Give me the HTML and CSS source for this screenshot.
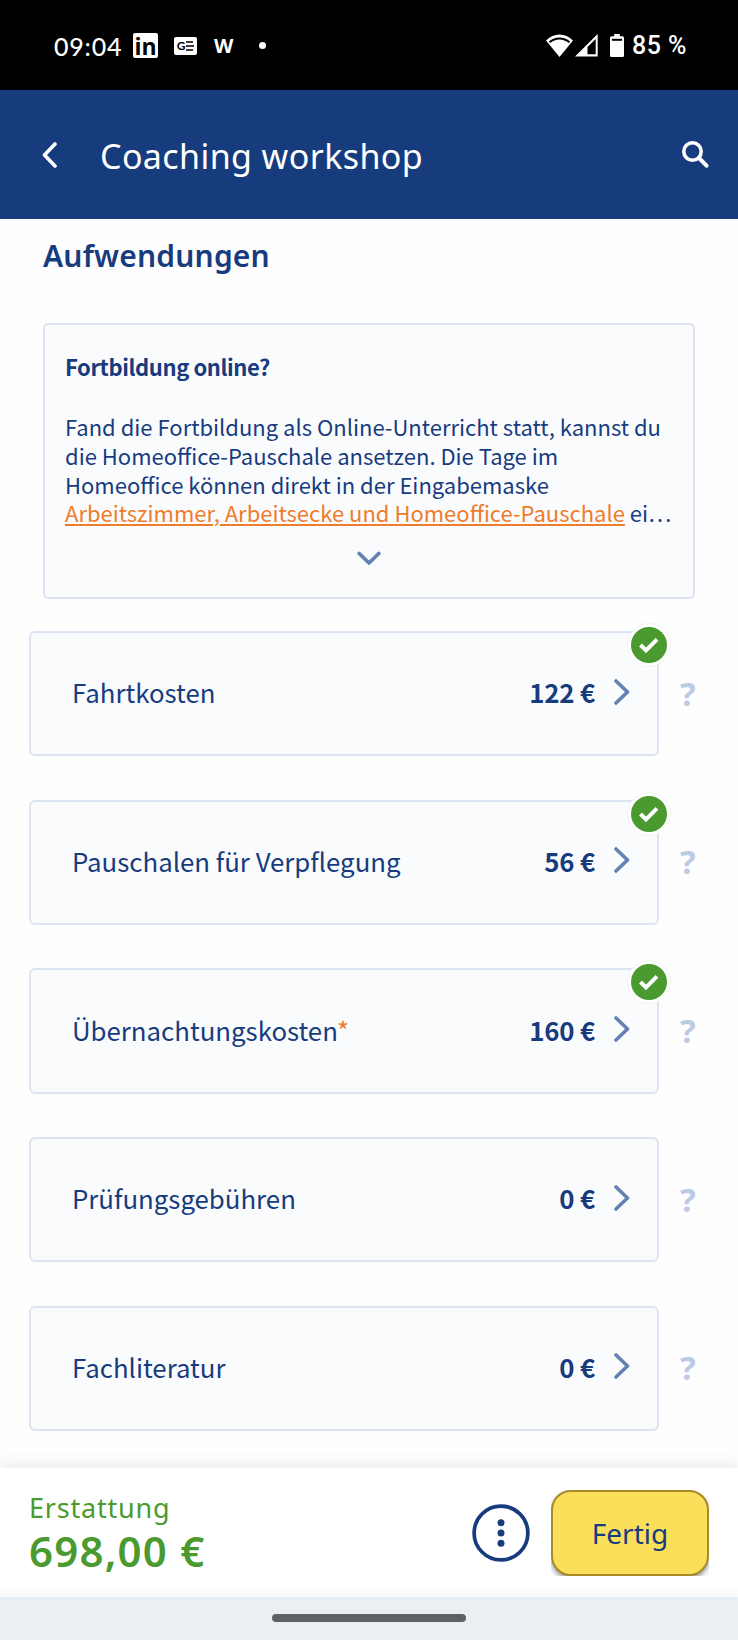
FILE: index.html
```html
<!DOCTYPE html>
<html lang="de">
<head>
  <meta charset="UTF-8">
  <title>Coaching workshop</title>
  <link rel="stylesheet" href="styles.css">
</head>
<body>
  <div class="statusbar">
    <span class="time">09:04</span>
    <div class="notifications">
      <span class="linkedin">in</span>
      <span class="news">
        <b>G</b>
        <svg width="8" height="10" viewBox="0 0 8 10"><path d="M0 1h7M0 5h8M0 9h7" stroke="#000" stroke-width="1.6"/></svg>
      </span>
      <span class="w">W</span>
      <span class="dot"></span>
    </div>
    <div class="system">
      <svg width="27" height="23" viewBox="0 0 27 23">
        <path d="M0 6.500C7.500-1.500 19.500-1.500 27 6.500L13.500 23Z" fill="#fff"/>
        <path d="M3.500 8.200C9.500 3.200 17.500 3.200 23.500 8.200" fill="none" stroke="#000" stroke-width="2"/>
      </svg>
      <svg class="signal" width="23" height="23" viewBox="0 0 23 23">
        <path d="M0 22.500L22.700 0V22.500Z" fill="#fff"/>
        <path d="M12.500 13L20.700 5V20.300H12.500Z" fill="#000"/>
      </svg>
      <svg class="battery" width="14" height="23" viewBox="0 0 14 23">
        <path d="M4.200 0H9.800V2.200H12.500Q14 2.200 14 3.700V21.500Q14 23 12.500 23H1.500Q0 23 0 21.500V3.700Q0 2.200 1.500 2.200H4.200Z" fill="#fff"/>
        <path d="M2 5.800H12" stroke="#000" stroke-width="2"/>
      </svg>
      <span class="percent">85 %</span>
    </div>
  </div>

  <header class="header">
    <svg class="back" width="15" height="26" viewBox="0 0 15 26"><path d="M13 2L2.500 13L13 24" fill="none" stroke="#fff" stroke-width="3.600" stroke-linecap="round" stroke-linejoin="round"/></svg>
    <h1>Coaching workshop</h1>
    <svg class="search" width="27" height="27" viewBox="0 0 27 27"><circle cx="10.500" cy="10.500" r="8.700" fill="none" stroke="#fff" stroke-width="3.600"/><path d="M17 17L24.500 24.700" stroke="#fff" stroke-width="4" stroke-linecap="round"/></svg>
  </header>

  <main>
    <h2>Aufwendungen</h2>

    <section class="info">
      <h3>Fortbildung online?</h3>
      <p>Fand die Fortbildung als Online-Unterricht statt, kannst du<br>
        die Homeoffice-Pauschale ansetzen. Die Tage im<br>
        Homeoffice können direkt in der Eingabemaske<br>
        <a>Arbeitszimmer, Arbeitsecke und Homeoffice-Pauschale</a> ei…</p>
      <svg class="expand" width="24" height="15" viewBox="0 0 24 15"><path d="M2.200 2.500L12 12L21.800 2.500" fill="none" stroke="#6482b1" stroke-width="3.800" stroke-linecap="round" stroke-linejoin="round"/></svg>
    </section>

    <div class="list">
      <div class="row">
        <div class="card">
          <span class="label">Fahrtkosten</span>
          <span class="amount">122 €</span>
          <svg class="chevron" width="16" height="26" viewBox="0 0 16 26"><path d="M2 2L13.500 13L2 24" fill="none" stroke="#6482b1" stroke-width="3.600" stroke-linecap="round" stroke-linejoin="round"/></svg>
          <svg class="check" width="44" height="44" viewBox="0 0 44 44"><circle cx="22" cy="22" r="21.500" fill="#fff" stroke="#eaf4e6" stroke-width=".8"/><circle cx="22" cy="22" r="18" fill="#4a9a2f"/><path d="M13.500 22L19 27.500L30 16.400" fill="none" stroke="#fff" stroke-width="4"/></svg>
        </div>
        <span class="help">?</span>
      </div>
      <div class="row">
        <div class="card">
          <span class="label">Pauschalen für Verpflegung</span>
          <span class="amount">56 €</span>
          <svg class="chevron" width="16" height="26" viewBox="0 0 16 26"><path d="M2 2L13.500 13L2 24" fill="none" stroke="#6482b1" stroke-width="3.600" stroke-linecap="round" stroke-linejoin="round"/></svg>
          <svg class="check" width="44" height="44" viewBox="0 0 44 44"><circle cx="22" cy="22" r="21.500" fill="#fff" stroke="#eaf4e6" stroke-width=".8"/><circle cx="22" cy="22" r="18" fill="#4a9a2f"/><path d="M13.500 22L19 27.500L30 16.400" fill="none" stroke="#fff" stroke-width="4"/></svg>
        </div>
        <span class="help">?</span>
      </div>
      <div class="row">
        <div class="card">
          <span class="label">Übernachtungskosten<span class="required">*</span></span>
          <span class="amount">160 €</span>
          <svg class="chevron" width="16" height="26" viewBox="0 0 16 26"><path d="M2 2L13.500 13L2 24" fill="none" stroke="#6482b1" stroke-width="3.600" stroke-linecap="round" stroke-linejoin="round"/></svg>
          <svg class="check" width="44" height="44" viewBox="0 0 44 44"><circle cx="22" cy="22" r="21.500" fill="#fff" stroke="#eaf4e6" stroke-width=".8"/><circle cx="22" cy="22" r="18" fill="#4a9a2f"/><path d="M13.500 22L19 27.500L30 16.400" fill="none" stroke="#fff" stroke-width="4"/></svg>
        </div>
        <span class="help">?</span>
      </div>
      <div class="row">
        <div class="card">
          <span class="label">Prüfungsgebühren</span>
          <span class="amount">0 €</span>
          <svg class="chevron" width="16" height="26" viewBox="0 0 16 26"><path d="M2 2L13.500 13L2 24" fill="none" stroke="#6482b1" stroke-width="3.600" stroke-linecap="round" stroke-linejoin="round"/></svg>
        </div>
        <span class="help">?</span>
      </div>
      <div class="row">
        <div class="card">
          <span class="label">Fachliteratur</span>
          <span class="amount">0 €</span>
          <svg class="chevron" width="16" height="26" viewBox="0 0 16 26"><path d="M2 2L13.500 13L2 24" fill="none" stroke="#6482b1" stroke-width="3.600" stroke-linecap="round" stroke-linejoin="round"/></svg>
        </div>
        <span class="help">?</span>
      </div>
    </div>
  </main>

  <footer class="footer">
    <div class="refund">
      <div class="refund-label">Erstattung</div>
      <div class="refund-value">698,00 €</div>
    </div>
    <svg class="more" width="58" height="58" viewBox="0 0 58 58"><circle cx="29" cy="29" r="26.900" fill="none" stroke="#173c7e" stroke-width="3.700"/><g fill="#173c7e"><circle cx="29" cy="18.700" r="3.500"/><circle cx="29" cy="29" r="3.500"/><circle cx="29" cy="39.300" r="3.500"/></g></svg>
    <div class="done-wrap"><button class="done">Fertig</button></div>
  </footer>

  <div class="navbar"><span class="pill"></span></div>
</body>
</html>
```

FILE: styles.css
```css
* {
  box-sizing: border-box;
}

body {
  margin: 0;
  height: 1640px;
  display: flex;
  flex-direction: column;
  overflow: hidden;
  background: #fefefe;
  color: #173c7e;
  font-family: "Noto Sans CJK JP", sans-serif;
}

h1, h2, h3, p {
  margin: 0;
}

svg {
  display: block;
  flex: none;
}

/* status bar */
.statusbar {
  height: 90px;
  padding: 1px 51px 0 54px;
  display: flex;
  align-items: center;
  background: #000;
  color: #fff;
  font-family: Lato, sans-serif;
}

.time {
  width: 79px;
  font-size: 25px;
  font-weight: 500;
  letter-spacing: 0.8px;
}

.notifications {
  display: flex;
  align-items: center;
}

.linkedin {
  width: 25px;
  height: 25px;
  border-radius: 2px;
  background: #fff;
  color: #000;
  font: bold 23px/26px "Open Sans", sans-serif;
  text-align: center;
}

.news {
  width: 23px;
  height: 18px;
  margin-left: 16px;
  border-radius: 2px;
  display: flex;
  align-items: center;
  justify-content: center;
  gap: 1px;
  background: #fff;
  color: #000;
  font-size: 12px;
}

.w {
  margin-left: 17px;
  font: bold 20px/24px "Open Sans", sans-serif;
}

.dot {
  width: 7px;
  height: 7px;
  margin-left: 26px;
  border-radius: 50%;
  background: #fff;
}

.system {
  margin-left: auto;
  display: flex;
  align-items: center;
}

.signal {
  margin-left: 2px;
}

.battery {
  margin: 0 8px 0 12px;
}

.percent {
  font: 500 25px/30px Roboto, sans-serif;
  letter-spacing: 0.5px;
}

/* header */
.header {
  height: 129px;
  padding: 0 29px 0 42px;
  display: flex;
  align-items: center;
  background: #173c7e;
  color: #fff;
}

.header h1 {
  margin-left: 43px;
  padding-top: 3px;
  font: 400 34px/44px "Noto Sans", sans-serif;
  letter-spacing: 0.4px;
  white-space: nowrap;
}

.search {
  margin-left: auto;
}

/* content */
main {
  flex: 1;
}

h2 {
  height: 104px;
  padding: 15px 43px 0;
  font: 600 30px/44px "Noto Sans", sans-serif;
  letter-spacing: 0.2px;
}

.info {
  height: 276px;
  margin: 0 43px;
  padding: 27px 20px 0;
  border: 2px solid #dbe4f0;
  border-radius: 5px;
  background: #fafbfd;
  font-size: 22px;
  line-height: 28.7px;
}

.info h3 {
  font-size: 22px;
  font-weight: 700;
  letter-spacing: -0.4px;
}

.info p {
  margin-top: 31.5px;
  white-space: nowrap;
}

.info a {
  color: #ee7d2b;
  text-decoration: underline;
}

.expand {
  margin: 24px auto 0;
}

.list {
  margin-top: 32px;
  padding-left: 29px;
  display: flex;
  flex-direction: column;
  gap: 43.4px;
}

.row {
  display: flex;
  align-items: center;
}

.card {
  position: relative;
  width: 630px;
  height: 125.3px;
  padding: 0 27px 0 41px;
  display: flex;
  align-items: center;
  border: 2px solid #dbe4f0;
  border-radius: 6px;
  background: #fafbfd;
  font-size: 25.8px;
}

.label,
.amount {
  padding-bottom: 4px;
}

.required {
  color: #ee7d2b;
}

.amount {
  margin-left: auto;
  font-weight: 600;
  letter-spacing: -0.2px;
}

.chevron {
  margin: 0 0 4px 19px;
}

.check {
  position: absolute;
  top: -10px;
  right: -14px;
}

.help {
  margin-left: 21px;
  color: #bccbe5;
  font: 700 33px/40px "Noto Sans", sans-serif;
}

/* bottom bar */
.footer {
  height: 129px;
  padding: 0 29px;
  display: flex;
  align-items: center;
  background: linear-gradient(#fff 118px, #f9f9f9);
  box-shadow: 0 -3px 14px rgba(60, 70, 80, 0.12);
}

.refund {
  color: #4a9a2f;
  font-family: "Noto Sans", sans-serif;
  white-space: nowrap;
}

.refund-label {
  font-size: 27px;
  line-height: 36px;
  letter-spacing: 0.8px;
}

.refund-value {
  font-size: 42px;
  font-weight: 600;
  line-height: 50px;
  letter-spacing: 1.2px;
}

.more {
  margin-left: auto;
}

/* clips the button shadow to its box */
.done-wrap {
  margin-left: 21px;
  overflow: hidden;
}

.done {
  display: block;
  width: 158px;
  height: 86px;
  border: 2px solid #a98a2b;
  border-radius: 20px;
  background: #fadf5a;
  box-shadow: 0 3px 5px rgba(0, 0, 0, 0.4);
  color: #173c7e;
  font: 400 28px/40px "Noto Sans", sans-serif;
}

.navbar {
  height: 43px;
  display: flex;
  justify-content: center;
  padding-top: 17px;
  background: #eaeff4;
}

.pill {
  width: 194px;
  height: 8px;
  border-radius: 4px;
  background: #5f6062;
}
```
